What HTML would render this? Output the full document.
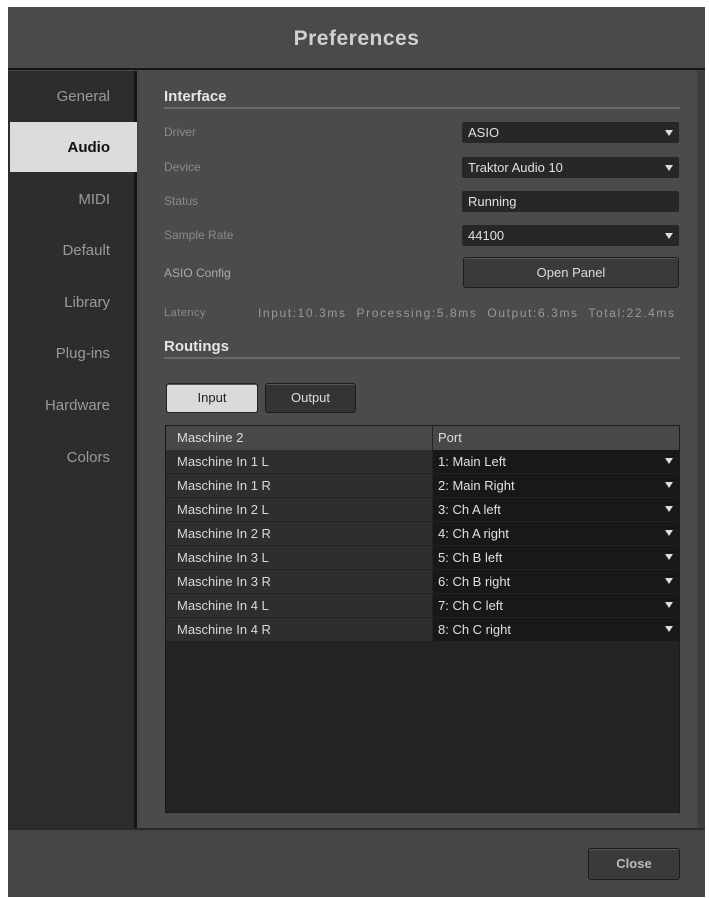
<!DOCTYPE html>
<html><head><meta charset="utf-8"><style>
*{margin:0;padding:0;box-sizing:border-box}
body{width:709px;height:898px;background:#fff;position:relative;font-family:"Liberation Sans",sans-serif;overflow:hidden}
.a{position:absolute}
.win{left:8px;top:7px;width:697px;height:890px;background:#474747}
.title{left:8px;top:7px;width:697px;height:63px;background:#4a4a4a;border-bottom:2px solid #151515;color:#d0d0d0;font-size:21px;font-weight:bold;text-align:center;line-height:64px;letter-spacing:.5px}
.side{left:8px;top:71px;width:129px;height:757px;background:#2d2d2d;border-right:3px solid #151515}
.si{position:absolute;right:24px;font-size:15px;color:#9a9a9a}
.main{left:139px;top:71px;width:558px;height:757px;background:#4b4b4b}
.rb{left:697px;top:71px;width:8px;height:757px;background:#3e3e3e}
.bot{left:8px;top:828px;width:697px;height:69px;background:#464646;border-top:2px solid #2a2a2a}
.h{font-size:15px;font-weight:bold;color:#e6e6e6}
.line{height:2px;background:#6a6a6a}
.lab{font-size:12px;color:#8a8a8a}
.dd{background:#272727;height:21px;color:#e0e0e0;font-size:13px;line-height:21px;padding-left:6px;border-radius:2px}
.tri{position:absolute;right:6px;top:8px;width:0;height:0;border-left:4px solid transparent;border-right:4px solid transparent;border-top:6px solid #ddd}
.btn{background:#3a3a3a;border:1px solid #1c1c1c;border-radius:3px;color:#ddd;font-size:13px;text-align:center;box-shadow:inset 0 1px 0 #555}
.row{position:absolute;left:0;width:513px;height:24px}
.row .l{position:absolute;left:0;width:266px;height:23px;background:#2e2e2e;color:#d8d8d8;font-size:13px;line-height:23px;padding-left:11px}
.row .r{position:absolute;left:267px;width:246px;height:23px;background:#181818;color:#e0e0e0;font-size:13px;line-height:23px;padding-left:5px}
</style></head><body>
<div class="a win"></div>
<div class="a title">Preferences</div>
<div class="a side">
<div class="si" style="top:17px">General</div>
<div style="position:absolute;left:2px;top:51px;width:127px;height:50px;background:#dcdcdc"></div>
<div class="si" style="top:68px;color:#111;font-weight:bold">Audio</div>
<div class="si" style="top:120px">MIDI</div>
<div class="si" style="top:171px">Default</div>
<div class="si" style="top:223px">Library</div>
<div class="si" style="top:274px">Plug-ins</div>
<div class="si" style="top:326px">Hardware</div>
<div class="si" style="top:378px">Colors</div>
</div>
<div class="a main"></div>
<div class="a rb"></div>
<div class="a h" style="left:164px;top:88px">Interface</div>
<div class="a line" style="left:164px;top:107px;width:516px"></div>
<div class="a lab" style="left:164px;top:125px">Driver</div>
<div class="a lab" style="left:164px;top:160px">Device</div>
<div class="a lab" style="left:164px;top:194px">Status</div>
<div class="a lab" style="left:164px;top:228px">Sample Rate</div>
<div class="a lab" style="left:164px;top:266px;color:#aaa">ASIO Config</div>
<div class="a dd" style="left:462px;top:122px;width:217px">ASIO<span class="tri"></span></div>
<div class="a dd" style="left:462px;top:157px;width:217px">Traktor Audio 10<span class="tri"></span></div>
<div class="a dd" style="left:462px;top:191px;width:217px">Running</div>
<div class="a dd" style="left:462px;top:225px;width:217px">44100<span class="tri"></span></div>
<div class="a btn" style="left:463px;top:257px;width:216px;height:31px;line-height:29px">Open Panel</div>
<div class="a lab" style="left:164px;top:307px;font-size:11px;letter-spacing:.5px">Latency</div>
<div class="a lab" style="left:258px;top:306px;font-size:12px;letter-spacing:1.6px;word-spacing:5px;color:#999;white-space:nowrap">Input:10.3ms Processing:5.8ms Output:6.3ms Total:22.4ms</div>
<div class="a h" style="left:164px;top:338px">Routings</div>
<div class="a line" style="left:164px;top:357px;width:516px"></div>
<div class="a btn" style="left:166px;top:383px;width:92px;height:30px;line-height:28px;background:#dadada;color:#222;border-color:#222">Input</div>
<div class="a btn" style="left:265px;top:383px;width:91px;height:30px;line-height:28px;background:#343434">Output</div>
<div class="a" style="left:165px;top:425px;width:515px;height:388px;background:#232323;border:1px solid #1a1a1a">
<div style="position:absolute;left:0;top:0;width:266px;height:24px;background:#484848;color:#ddd;font-size:13px;line-height:24px;padding-left:11px">Maschine 2</div>
<div style="position:absolute;left:267px;top:0;width:246px;height:24px;background:#484848;color:#ddd;font-size:13px;line-height:24px;padding-left:5px">Port</div>
<div class="row" style="top:24px"><div class="l">Maschine In 1 L</div><div class="r">1: Main Left<span class="tri"></span></div></div>
<div class="row" style="top:48px"><div class="l">Maschine In 1 R</div><div class="r">2: Main Right<span class="tri"></span></div></div>
<div class="row" style="top:72px"><div class="l">Maschine In 2 L</div><div class="r">3: Ch A left<span class="tri"></span></div></div>
<div class="row" style="top:96px"><div class="l">Maschine In 2 R</div><div class="r">4: Ch A right<span class="tri"></span></div></div>
<div class="row" style="top:120px"><div class="l">Maschine In 3 L</div><div class="r">5: Ch B left<span class="tri"></span></div></div>
<div class="row" style="top:144px"><div class="l">Maschine In 3 R</div><div class="r">6: Ch B right<span class="tri"></span></div></div>
<div class="row" style="top:168px"><div class="l">Maschine In 4 L</div><div class="r">7: Ch C left<span class="tri"></span></div></div>
<div class="row" style="top:192px"><div class="l">Maschine In 4 R</div><div class="r">8: Ch C right<span class="tri"></span></div></div>
</div>
<div class="a bot"></div>
<div class="a btn" style="left:588px;top:848px;width:92px;height:32px;line-height:30px;font-weight:bold;color:#bbb">Close</div>
</body></html>
